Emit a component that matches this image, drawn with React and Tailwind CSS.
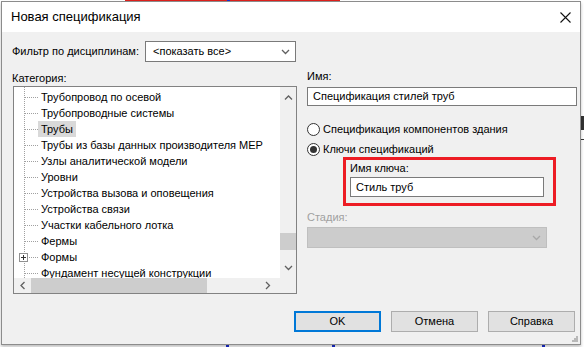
import React from "react";

const rows = [
  "Трубопровод по осевой",
  "Трубопроводные системы",
  "Трубы",
  "Трубы из базы данных производителя MEP",
  "Узлы аналитической модели",
  "Уровни",
  "Устройства вызова и оповещения",
  "Устройства связи",
  "Участки кабельного лотка",
  "Фермы",
  "Формы",
  "Фундамент несущей конструкции",
];

function Chevron({ dir = "down", color = "#606060" }) {
  const paths = {
    down: "M1 1 L4.5 4.5 L8 1",
    up: "M1 4.5 L4.5 1 L8 4.5",
    left: "M4.5 1 L1 4.5 L4.5 8",
    right: "M1 1 L4.5 4.5 L1 8",
  };
  const vertical = dir === "down" || dir === "up";
  return (
    <svg
      width={vertical ? 9 : 6}
      height={vertical ? 6 : 9}
      viewBox={vertical ? "0 0 9 6" : "0 0 6 9"}
      fill="none"
      className="shrink-0"
    >
      <path d={paths[dir]} stroke={color} strokeWidth="1.3" />
    </svg>
  );
}

function Radio({ checked, label }) {
  return (
    <div className="flex items-center h-[16px]">
      <div className="w-[13px] h-[13px] rounded-full border border-[#333] bg-white flex items-center justify-center">
        {checked && <div className="w-[7px] h-[7px] rounded-full bg-[#333]" />}
      </div>
      <span className="ml-[3px] whitespace-nowrap">{label}</span>
    </div>
  );
}

function Button({ children, primary }) {
  return (
    <div
      className={
        "h-[21px] w-[87px] flex items-center justify-center bg-[#e1e1e1] " +
        (primary ? "border-2 border-[#0078d7]" : "border border-[#adadad]")
      }
    >
      {children}
    </div>
  );
}

function Tree() {
  return (
    <div className="relative flex-1 min-w-0 overflow-hidden bg-white">
      <div className="absolute left-[10px] top-0 bottom-0 border-l border-dotted border-[#a0a0a0]" />
      <div className="pt-[2px]">
        {rows.map((r) => (
          <div key={r} className="relative flex items-center h-[16px]">
            <div className="ml-[11px] w-[13px] shrink-0 border-t border-dotted border-[#a0a0a0]" />
            {r === "Формы" && (
              <div className="absolute left-[5px] top-[4px] w-[9px] h-[9px] border border-[#919191] bg-white flex items-center justify-center">
                <div className="relative w-[5px] h-[5px]">
                  <div className="absolute left-0 right-0 top-[2px] h-px bg-[#333]" />
                  <div className="absolute top-0 bottom-0 left-[2px] w-px bg-[#333]" />
                </div>
              </div>
            )}
            <span
              className={
                "px-[3px] h-[16px] leading-[16px] whitespace-nowrap shrink-0 " +
                (r === "Трубы" ? "bg-[#d9d9d9]" : "")
              }
            >
              {r}
            </span>
          </div>
        ))}
      </div>
    </div>
  );
}

export default function App() {
  return (
    <div
      className="relative w-[584px] h-[347px] bg-white overflow-hidden pt-[1px] pl-[1px] text-[11px] text-black"
      style={{ fontFamily: '"Liberation Sans", Arial, sans-serif' }}
    >
      {/* stuff behind the dialog */}
      <div className="absolute top-0 left-[125px] w-[215px] h-[2px] bg-[#e0201c]" />
      <div className="absolute top-0 left-[227px] w-[3px] h-[2px] bg-[#1a2bd1]" />
      <div className="absolute top-[116px] left-[581px] w-[3px] h-[14px] bg-[#333]" />
      <div className="absolute top-[139px] left-[580px] w-[4px] h-px bg-[#333]" />
      <div className="absolute top-[345px] left-[226px] w-[3px] h-[2px] bg-[#1a2bd1]" />
      <div className="absolute top-[345px] left-[332px] w-[3px] h-[2px] bg-[#1a2bd1]" />
      <div className="absolute top-[345px] left-[542px] w-[3px] h-[2px] bg-[#1a2bd1]" />

      <div className="relative w-[580px] h-[344px] border border-[#8c8c8c] flex flex-col bg-[#f0f0f0] shadow-[0_2px_3px_rgba(0,0,0,0.25)]">
        {/* title bar */}
        <div className="h-[30px] bg-white flex items-center justify-between pl-[9px] pr-[9px] shrink-0">
          <span className="text-[13px] whitespace-nowrap">Новая спецификация</span>
          <svg width="11" height="11" viewBox="0 0 11 11">
            <path d="M0.5 0.5 L10.5 10.5 M10.5 0.5 L0.5 10.5" stroke="#111" strokeWidth="1.1" />
          </svg>
        </div>

        <div className="flex-1 flex flex-col pl-[10px]">
          {/* filter */}
          <div className="flex items-center mt-[9px] h-[21px]">
            <span className="w-[133px] whitespace-nowrap">Фильтр по дисциплинам:</span>
            <div className="w-[151px] h-[21px] border border-[#7a7a7a] bg-white flex items-center justify-between pl-[7px] pr-[5px]">
              <span className="whitespace-nowrap">&lt;показать все&gt;</span>
              <Chevron />
            </div>
          </div>

          <div className="flex">
            {/* left column */}
            <div className="flex flex-col w-[286px] shrink-0">
              <div className="mt-[8px] h-[16px] leading-[16px]">Категория:</div>
              <div className="ml-[1px] w-[284px] h-[208px] border border-[#828282] flex flex-col">
                <div className="flex flex-1 min-h-0 overflow-hidden">
                  <Tree />
                  <div className="w-[16px] shrink-0 bg-[#f0f0f0] flex flex-col items-center">
                    <div className="h-[22px] flex items-center justify-center">
                      <Chevron dir="up" />
                    </div>
                    <div className="mt-[124px] w-full h-[17px] bg-[#cdcdcd]" />
                    <div className="mt-auto h-[20px] flex items-center justify-center">
                      <Chevron dir="down" />
                    </div>
                  </div>
                </div>
                <div className="h-[15px] shrink-0 bg-[#f0f0f0] flex items-center">
                  <div className="w-[17px] flex items-center justify-center">
                    <Chevron dir="left" />
                  </div>
                  <div className="w-[176px] h-full bg-[#cdcdcd]" />
                  <div className="ml-[52px] w-[17px] flex items-center justify-center">
                    <Chevron dir="right" />
                  </div>
                </div>
              </div>
            </div>

            {/* right column */}
            <div className="flex flex-col ml-[9px] w-[270px]">
              <div className="mt-[6px] h-[16px] leading-[16px]">Имя:</div>
              <div className="mt-[3px] h-[19px] border border-[#7a7a7a] bg-white flex items-center pl-[5px] whitespace-nowrap">
                Спецификация стилей труб
              </div>
              <div className="mt-[15px]">
                <Radio label="Спецификация компонентов здания" />
              </div>
              <div className="mt-[4px]">
                <Radio checked label="Ключи спецификаций" />
              </div>
              <div className="ml-[36px] w-[213px] border-[3px] border-[#ed1c24] flex flex-col pb-[6px]">
                <div className="pl-[4px] h-[17px] leading-[17px]">Имя ключа:</div>
                <div className="ml-[4px] w-[194px] h-[20px] border border-[#7a7a7a] bg-white flex items-center pl-[5px]">
                  Стиль труб
                </div>
              </div>
              <div className="mt-[3px] h-[16px] leading-[16px] text-[#a0a0a0]">Стадия:</div>
              <div className="mt-[2px] w-[240px] h-[21px] border border-[#bfbfbf] bg-[#cccccc] flex items-center justify-end pr-[5px]">
                <Chevron color="#a8a8a8" />
              </div>
            </div>
          </div>

          {/* buttons */}
          <div className="mt-auto mb-[12px] flex justify-end pr-[5px] gap-[10px]">
            <Button primary>OK</Button>
            <Button>Отмена</Button>
            <Button>Справка</Button>
          </div>
        </div>

        {/* size grip */}
        <svg className="absolute right-[2px] bottom-[2px]" width="7" height="7" viewBox="0 0 7 7">
          <rect x="5" y="1" width="2" height="2" fill="#b8b8b8" />
          <rect x="3" y="3" width="2" height="2" fill="#b8b8b8" />
          <rect x="5" y="3" width="2" height="2" fill="#b8b8b8" />
          <rect x="1" y="5" width="2" height="2" fill="#b8b8b8" />
          <rect x="3" y="5" width="2" height="2" fill="#b8b8b8" />
          <rect x="5" y="5" width="2" height="2" fill="#b8b8b8" />
        </svg>
      </div>
    </div>
  );
}
